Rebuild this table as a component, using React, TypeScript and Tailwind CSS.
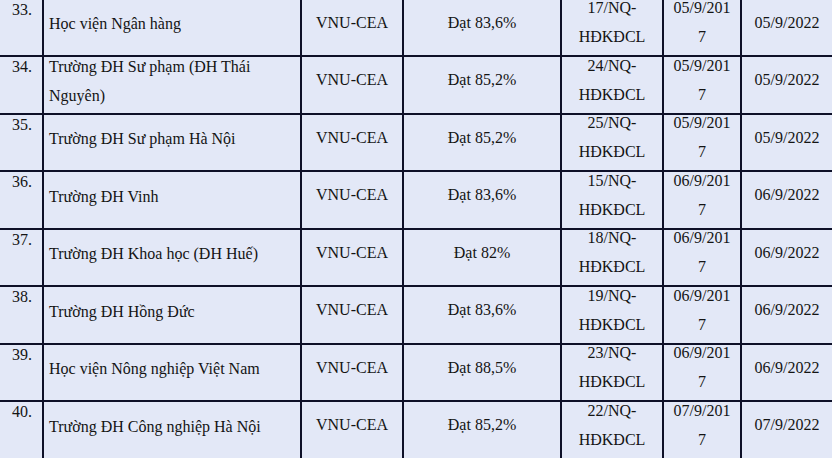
import React from 'react';

type Row = {
  no: string;
  name: string;
  org: string;
  result: string;
  nq: string;
  date1: string;
  date2: string;
};

const rows: Row[] = [
  { no: '33.', name: 'Học viện Ngân hàng', org: 'VNU-CEA', result: 'Đạt 83,6%', nq: '17/NQ-', date1: '05/9/201', date2: '05/9/2022' },
  { no: '34.', name: 'Trường ĐH Sư phạm (ĐH Thái Nguyên)', org: 'VNU-CEA', result: 'Đạt 85,2%', nq: '24/NQ-', date1: '05/9/201', date2: '05/9/2022' },
  { no: '35.', name: 'Trường ĐH Sư phạm Hà Nội', org: 'VNU-CEA', result: 'Đạt 85,2%', nq: '25/NQ-', date1: '05/9/201', date2: '05/9/2022' },
  { no: '36.', name: 'Trường ĐH Vinh', org: 'VNU-CEA', result: 'Đạt 83,6%', nq: '15/NQ-', date1: '06/9/201', date2: '06/9/2022' },
  { no: '37.', name: 'Trường ĐH Khoa học (ĐH Huế)', org: 'VNU-CEA', result: 'Đạt 82%', nq: '18/NQ-', date1: '06/9/201', date2: '06/9/2022' },
  { no: '38.', name: 'Trường ĐH Hồng Đức', org: 'VNU-CEA', result: 'Đạt 83,6%', nq: '19/NQ-', date1: '06/9/201', date2: '06/9/2022' },
  { no: '39.', name: 'Học viện Nông nghiệp Việt Nam', org: 'VNU-CEA', result: 'Đạt 88,5%', nq: '23/NQ-', date1: '06/9/201', date2: '06/9/2022' },
  { no: '40.', name: 'Trường ĐH Công nghiệp Hà Nội', org: 'VNU-CEA', result: 'Đạt 85,2%', nq: '22/NQ-', date1: '07/9/201', date2: '07/9/2022' },
];

const cell = 'bg-[#e3e8f7] flex items-center leading-[29px]';

export default function App() {
  return (
    <div className="w-[832px] h-[458px] overflow-hidden bg-[#e3e8f7] font-['Liberation_Serif','DejaVu_Serif',serif]">
      <div className="grid grid-cols-[42px_256px_100px_156px_100px_76px_90px] grid-rows-[55px_56px_55px_56px_55px_56px_55px_56px] gap-[2px] bg-[#0e1028] text-[16px] text-[#141414]">
        {rows.map(r => (
          <React.Fragment key={r.no}>
            <div className="bg-[#e3e8f7] pl-3 leading-[20px]">{r.no}</div>
            <div className={`${cell} pl-[5px] pr-2 pb-[8px]`}>
              <span className="text-left">{r.name}</span>
            </div>
            <div className={`${cell} justify-center pb-[11px]`}>{r.org}</div>
            <div className={`${cell} justify-center pb-[11px]`}>{r.result}</div>
            <div className={`${cell} justify-center pb-[11px] text-center`}>
              <span>
                {r.nq}
                <br />
                HĐKĐCL
              </span>
            </div>
            <div className={`${cell} justify-center pb-[11px] text-center`}>
              <span>
                {r.date1}
                <br />7
              </span>
            </div>
            <div className={`${cell} justify-center pb-[11px]`}>{r.date2}</div>
          </React.Fragment>
        ))}
      </div>
    </div>
  );
}
